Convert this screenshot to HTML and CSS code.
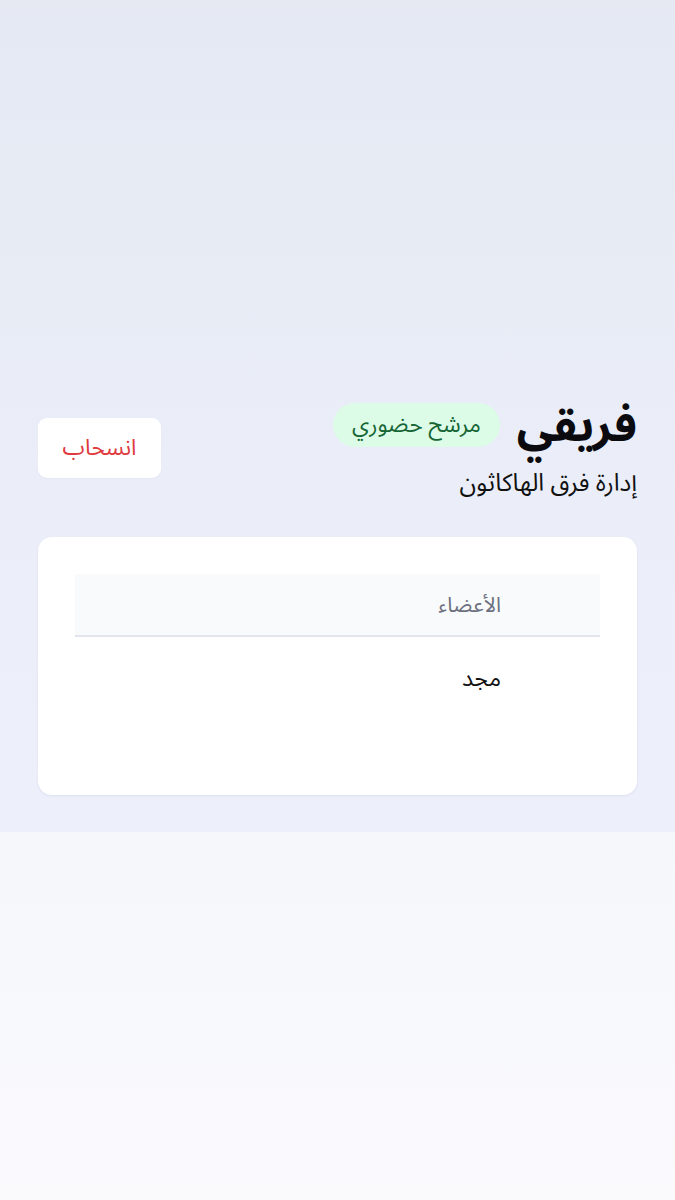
FILE: index.html
```html
<!DOCTYPE html>
<html lang="ar" dir="rtl">
<head>
<meta charset="utf-8">
<title>فريقي</title>
<link rel="stylesheet" href="styles.css">
</head>
<body>
<main class="page">
  <section class="hero">
    <header class="head">
      <div class="head-text">
        <div class="title-row">
          <h1 class="title">فريقي</h1>
          <span class="badge">مرشح حضوري</span>
        </div>
        <p class="subtitle">إدارة فرق الهاكاثون</p>
      </div>
      <button class="withdraw">انسحاب</button>
    </header>
    <div class="card">
      <table class="members">
        <thead>
          <tr><th>الأعضاء</th><th></th></tr>
        </thead>
        <tbody>
          <tr><td>مجد</td><td></td></tr>
        </tbody>
      </table>
    </div>
  </section>
  <section class="rest"></section>
</main>
</body>
</html>
```
FILE: styles.css
```css
* { box-sizing: border-box; }
html, body { margin: 0; padding: 0; }
body {
  font-family: "Noto Sans Arabic", "Noto Sans", "DejaVu Sans", sans-serif;
  background: #f9f9fc;
  color: #111;
}
.page { display: flex; flex-direction: column; min-height: 1200px; }
.hero {
  height: 832px;
  background: linear-gradient(180deg, #e6e9f2 0px, #e5e9f4 20px, #e7ebf4 200px, #eceffa 600px, #edf0fb 832px);
  padding: 400px 38px 37px 38px;
  display: flex;
  flex-direction: column;
}
.rest {
  flex: 1;
  background: linear-gradient(180deg, #f6f7fb, #fafafd);
}
.head {
  display: flex;
  justify-content: space-between;
  align-items: flex-start;
}
.head-text { display: flex; flex-direction: column; align-items: flex-start; }
.title-row { display: flex; align-items: center; gap: 17px; height: 54px; }
.title {
  margin: 0;
  font-size: 46px;
  font-weight: 700;
  line-height: 54px;
  color: #0b0b0f;
}
.badge {
  background: #dcfce7;
  color: #166534;
  font-size: 22.5px;
  padding: 0 19px;
  height: 44px;
  line-height: 44px;
  border-radius: 22px;
  display: inline-block;
  margin-top: -4px;
}
.subtitle {
  margin: 13px 0 0;
  font-size: 24.5px;
  line-height: 32px;
  color: #111;
}
.withdraw {
  margin-top: 18px;
  width: 123px;
  height: 60px;
  background: #fff;
  border: none;
  border-radius: 9px;
  color: #e0393e;
  font-family: inherit;
  font-size: 22.5px;
  box-shadow: 0 1px 2px rgba(0,0,0,0.03);
}
.card {
  margin-top: 38px;
  background: #fff;
  border-radius: 14px;
  box-shadow: 0 1px 3px rgba(30,40,80,0.08);
  padding: 37px 37px 75px;
  height: 258px;
}
.members { width: 100%; border-collapse: collapse; }
.members th {
  background: #f9fafb;
  height: 62px;
  border-bottom: 2px solid #e4e4ee;
  text-align: right;
  font-weight: 400;
  color: #6b7080;
  font-size: 21px;
  padding: 0 99px 0 0;
}
.members th + th, .members td + td { padding: 0; width: 50%; }
.members td {
  height: 84px;
  text-align: right;
  font-size: 23px;
  color: #111;
  padding: 0 99px 0 0;
}
```
